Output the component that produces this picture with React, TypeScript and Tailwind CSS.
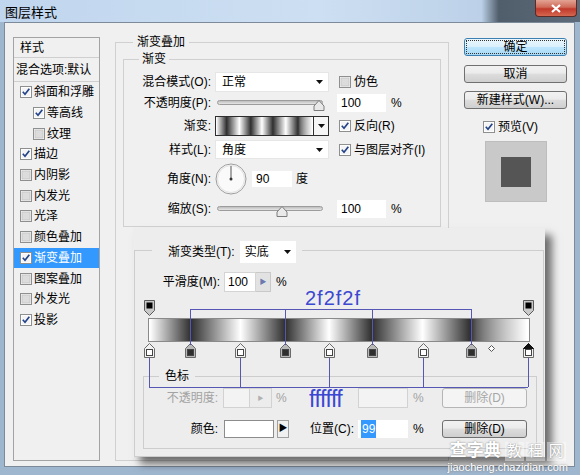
import type { ReactNode } from 'react';

type Stop = { x: number; color: string; selected?: boolean };

// color stops of the gradient editor, x in page pixels
const STOPS: Stop[] = [
  { x: 149, color: '#ffffff' },
  { x: 190, color: '#2f2f2f' },
  { x: 240, color: '#ffffff' },
  { x: 285, color: '#2f2f2f' },
  { x: 329, color: '#ffffff' },
  { x: 372, color: '#2f2f2f' },
  { x: 423, color: '#ffffff' },
  { x: 471, color: '#2f2f2f' },
  { x: 528, color: '#ffffff', selected: true },
];

const BAR_LEFT = 148;
const BAR_WIDTH = 382;
const OVERLAY_X = 133;
const OVERLAY_Y = 228;
const toPct = (x: number) => ((x - BAR_LEFT) / BAR_WIDTH) * 100;

const parts = STOPS.map((s) => `${s.color} ${toPct(s.x).toFixed(2)}%`);
parts.splice(STOPS.length - 1, 0, `${toPct(491).toFixed(2)}%`);
const BAR_GRADIENT = `linear-gradient(to right, ${parts.join(', ')})`;

const LIST_ITEMS: { label: string; checked: boolean; indent?: boolean; active?: boolean }[] = [
  { label: '斜面和浮雕', checked: true },
  { label: '等高线', checked: true, indent: true },
  { label: '纹理', checked: false, indent: true },
  { label: '描边', checked: true },
  { label: '内阴影', checked: false },
  { label: '内发光', checked: false },
  { label: '光泽', checked: false },
  { label: '颜色叠加', checked: false },
  { label: '渐变叠加', checked: true, active: true },
  { label: '图案叠加', checked: false },
  { label: '外发光', checked: false },
  { label: '投影', checked: true },
];

function CheckBox({ checked }: { checked?: boolean }) {
  return (
    <svg width="12" height="12" viewBox="0 0 12 12" className="shrink-0">
      <rect x="0.5" y="0.5" width="11" height="11" fill="#fdfdfd" stroke="#8e8f8f" />
      <rect x="2" y="2" width="8" height="8" fill={checked ? '#f4f4f4' : '#dcdcdc'} stroke={checked ? 'none' : '#c8c8c8'} strokeWidth="1" />
      {checked && (
        <path d="M2.8 5.8 L5 8.2 L9.3 2.8" stroke="#22438a" strokeWidth="1.7" fill="none" />
      )}
    </svg>
  );
}

function DropArrow() {
  return (
    <svg width="7" height="4" viewBox="0 0 7 4" className="shrink-0">
      <path d="M0 0 H7 L3.5 4 Z" fill="#111" />
    </svg>
  );
}

function Check({ checked, children }: { checked?: boolean; children: ReactNode }) {
  return (
    <div className="ml-[10px] flex items-center gap-[3px]">
      <CheckBox checked={checked} />
      <span>{children}</span>
    </div>
  );
}

function Select({ value }: { value: string }) {
  return (
    <div className="ml-[4px] flex h-full w-[114px] items-center justify-between border border-[#e6e6e6] bg-white pl-[6px] pr-[5px]">
      <span>{value}</span>
      <DropArrow />
    </div>
  );
}

function Slider({ value }: { value: number }) {
  return (
    <div className="relative ml-[6px] h-full w-[106px]">
      <div className="absolute left-0 right-0 top-[6px] h-[5px] rounded-full border border-[#9c9c9c] bg-[linear-gradient(#bdbdbd,#e6e6e6)]" />
      <svg
        className="absolute top-[5px]"
        style={{ left: `calc(${value}% - 6px)` }}
        width="12"
        height="12"
        viewBox="0 0 12 12"
      >
        <path d="M1 11.5 V7 L6 1.5 L11 7 V11.5 Z" fill="#e9e9e9" stroke="#7c7c7c" />
      </svg>
    </div>
  );
}

function Input({ value, className }: { value: string; className: string }) {
  return (
    <div className={`flex items-center bg-white pl-[4px] ${className}`}>{value}</div>
  );
}

function Button({ children, primary, disabled }: { children: ReactNode; primary?: boolean; disabled?: boolean }) {
  if (primary) {
    return (
      <div className="flex h-[18px] w-[103px] items-center justify-center rounded-[3px] border border-[#3c7fb1] bg-[linear-gradient(#eaf6fd,#d9f0fc_50%,#bee6fd_50%,#a7d9f5)] p-[1px]">
        <div className="flex h-full w-full items-center justify-center border border-dotted border-[#333]">
          {children}
        </div>
      </div>
    );
  }
  if (disabled) {
    return (
      <div className="flex h-full w-[85px] items-center justify-center rounded-[3px] border border-[#b5b5b5] bg-[#f4f4f4] text-[#a6a6a6]">
        {children}
      </div>
    );
  }
  return (
    <div className="flex h-[18px] w-[103px] items-center justify-center rounded-[3px] border border-[#707070] bg-[linear-gradient(#f2f2f2,#ebebeb_45%,#dddddd_50%,#cfcfcf)]">
      {children}
    </div>
  );
}

function BottomStop({ stop }: { stop: Stop }) {
  const dark = stop.color !== '#ffffff';
  return (
    <svg
      className="absolute top-0"
      style={{ left: `calc(${toPct(stop.x)}% - 5.5px)` }}
      width="11"
      height="15"
      viewBox="0 0 11 15"
    >
      <path d="M0.5 5.5 L5.5 0.5 L10.5 5.5 V14.5 H0.5 Z" fill={dark ? '#b8b8b8' : '#f2f2f2'} stroke="#6a6a6a" />
      {stop.selected && <path d="M0.5 5.5 L5.5 0.5 L10.5 5.5 Z" fill="#111" stroke="#111" />}
      <rect x="2.5" y="6.5" width="6" height="6" fill={stop.color} stroke="#444" />
    </svg>
  );
}

function TopStop({ pct }: { pct: number }) {
  return (
    <svg
      className="absolute top-0"
      style={{ left: `calc(${pct}% - 5.5px)` }}
      width="11"
      height="16"
      viewBox="0 0 11 16"
    >
      <path d="M0.5 0.5 H10.5 V10.5 L5.5 15.5 L0.5 10.5 Z" fill="#c9c9c9" stroke="#5a5a5a" />
      <rect x="2.5" y="2.5" width="6" height="6" fill="#000" />
    </svg>
  );
}

function Annotations() {
  const dark = STOPS.filter((s) => s.color !== '#ffffff').map((s) => s.x - OVERLAY_X);
  const light = STOPS.filter((s) => s.color === '#ffffff').map((s) => s.x - OVERLAY_X);
  const topY = 309 - OVERLAY_Y;
  const lowY = 387 - OVERLAY_Y;
  return (
    <svg className="pointer-events-none absolute left-0 top-0" width="412" height="229">
      <g stroke="#5656b4" strokeWidth="1" fill="none" shapeRendering="crispEdges">
        <line x1={dark[0]} y1={topY} x2={dark[dark.length - 1]} y2={topY} />
        {dark.map((x) => (
          <line key={`d${x}`} x1={x} y1={topY} x2={x} y2={117} />
        ))}
        <line x1={light[0]} y1={lowY} x2={light[light.length - 1]} y2={lowY} />
        {light.map((x) => (
          <line key={`l${x}`} x1={x} y1={130} x2={x} y2={lowY} />
        ))}
      </g>
    </svg>
  );
}

function GradientEditor() {
  return (
    <div className="absolute left-[133px] top-[228px] h-[229px] w-[412px] bg-[#ededed] px-[1px] pt-[13px] shadow-[7px_7px_8px_rgba(0,0,0,0.55)]">
      <fieldset className="h-[216px] border border-[#cdcdcd]">
        <legend className="ml-[17px] pl-[16px] pr-[6px]">
          <div className="flex h-[18px] items-start gap-[5px]">
            <span className="leading-[22px]">渐变类型(T):</span>
            <div className="flex h-[22px] w-[56px] items-center justify-between bg-white pl-[5px] pr-[5px]">
              <span>实底</span>
              <DropArrow />
            </div>
          </div>
        </legend>

        <div className="mt-[13px] flex h-[20px] items-center">
          <span className="w-[85px] text-right">平滑度(M):</span>
          <div className="ml-[4px] flex h-full w-[32px] items-center border border-[#d4d4d4] bg-white pl-[3px]">100</div>
          <div className="flex h-full w-[15px] items-center justify-center border border-l-0 border-[#c9c9c9] bg-[#e2e2e2] text-[7px] text-[#6a7ab0]">
            ▶
          </div>
          <span className="ml-[5px]">%</span>
        </div>

        <div className="ml-[13px] mt-[8px] w-[382px]">
          <div className="relative h-[16px]">
            <TopStop pct={0.5} />
            <TopStop pct={99.7} />
          </div>
          <div className="mt-[2px] h-[24px] border border-[#8a8a8a]" style={{ background: BAR_GRADIENT }} />
          <div className="relative mt-[1px] h-[15px]">
            {STOPS.map((s) => (
              <BottomStop key={s.x} stop={s} />
            ))}
            <svg className="absolute top-[2px]" style={{ left: `calc(${toPct(491)}% - 3px)` }} width="7" height="7" viewBox="0 0 7 7">
              <path d="M3.5 0.5 L6.5 3.5 L3.5 6.5 L0.5 3.5 Z" fill="#fff" stroke="#555" />
            </svg>
          </div>
        </div>

        <fieldset className="ml-[8px] mr-[6px] mt-[10px] h-[81px] border border-[#cdcdcd]">
          <legend className="ml-[15px] px-[6px] leading-[16px]">色标</legend>
          <div className="mt-[4px] flex h-[20px] items-center text-[#a3a3a3]">
            <span className="w-[74px] text-right">不透明度:</span>
            <div className="ml-[5px] h-full w-[27px] border border-[#d2d2d2] bg-[#f3f3f3]" />
            <div className="flex h-full w-[22px] items-center justify-center border border-l-0 border-[#d2d2d2] bg-[#ececec] text-[6px] text-[#b0b0b0]">
              ▶
            </div>
            <span className="ml-[4px] w-[14px]">%</span>
            <span className="w-[64px]" />
            <div className="ml-[4px] h-full w-[50px] border border-[#d2d2d2] bg-[#f3f3f3]" />
            <span className="ml-[5px] w-[10px]">%</span>
            <div className="ml-[19px] h-full">
              <Button disabled>删除(D)</Button>
            </div>
          </div>
          <div className="mt-[12px] flex h-[18px] items-center">
            <span className="w-[74px] text-right">颜色:</span>
            <div className="ml-[6px] h-full w-[50px] border border-[#8c8c8c] bg-white" />
            <div className="ml-[3px] flex h-full w-[12px] items-center justify-center border border-[#a0a0a0] bg-[#f0f0f0] text-[9px]">
              ▶
            </div>
            <span className="ml-[1px] w-[64px] text-right">位置(C):</span>
            <div className="ml-[4px] flex h-full w-[50px] items-center bg-white pl-[3px]">
              <span className="bg-[#3399ff] px-[1px] text-white">99</span>
            </div>
            <span className="ml-[5px] w-[10px]">%</span>
            <div className="ml-[19px] h-full">
              <div className="flex h-full w-[85px] items-center justify-center rounded-[3px] border border-[#707070] bg-[linear-gradient(#f2f2f2,#ebebeb_45%,#dddddd_50%,#cfcfcf)]">
                删除(D)
              </div>
            </div>
          </div>
        </fieldset>
      </fieldset>

      <Annotations />
      <span className="absolute left-[172px] top-[60px] text-[20px] leading-none tracking-[1px] text-[#3b48d2]">2f2f2f</span>
      <span className="absolute left-[176px] top-[160px] text-[23px] leading-none tracking-[-0.5px] text-[#3b48d2]">ffffff</span>
    </div>
  );
}

export default function App() {
  return (
    <div className="relative h-[475px] w-[580px] overflow-hidden bg-[#9fb6cf] font-['Liberation_Sans','Noto_Sans_CJK_SC',sans-serif] text-[12px] text-black">
      {/* title bar */}
      <div className="flex h-[22px] items-start bg-[linear-gradient(to_right,#c0d6ee_0%,#cddff2_55%,#bcd1e8_83%,#505d6b_86%,#5d6b7a_100%)]">
        <span className="ml-[5px] mt-[3px] text-[13px]">图层样式</span>
        <div className="ml-auto mr-[3px] flex h-[17px] w-[42px] items-center justify-center rounded-b-[4px] border border-t-0 border-[#5e2a26] bg-[linear-gradient(#e3a394,#cf6a59_45%,#c0392b_55%,#d4674f)]">
          <svg width="10" height="9" viewBox="0 0 10 9">
            <path d="M1 1 L9 8 M9 1 L1 8" stroke="#fff" strokeWidth="2.2" />
          </svg>
        </div>
      </div>

      {/* dialog body */}
      <div className="ml-[4px] mr-[5px] flex h-[445px] items-start border border-[#7c8a99] bg-[#f0f0f0] pl-[8px]">
        {/* styles list */}
        <div className="mt-[14px] flex h-[424px] w-[87px] flex-col border border-[#a3a3a3]">
          <div className="flex h-[20px] items-center border-b border-[#cfcfcf] pl-[6px]">样式</div>
          <div className="flex h-[24px] items-center border-b border-[#cfcfcf] pl-[2px]">混合选项:默认</div>
          {LIST_ITEMS.map((item) => (
            <div
              key={item.label}
              className={`flex h-[20.7px] items-center gap-[2px] ${item.indent ? 'pl-[19px]' : 'pl-[6px]'} ${
                item.active ? 'bg-[#3399ff] text-white' : ''
              }`}
            >
              <CheckBox checked={item.checked} />
              <span>{item.label}</span>
            </div>
          ))}
        </div>

        {/* gradient overlay settings */}
        <fieldset className="ml-[15px] mt-[11px] h-[427px] w-[334px] border border-[#d0d0d0]">
          <legend className="ml-[17px] px-[4px] leading-[16px]">渐变叠加</legend>
          <fieldset className="mx-[7px] mt-[1px] h-[176px] border border-[#d0d0d0]">
            <legend className="ml-[15px] px-[3px] leading-[16px]">渐变</legend>

            <div className="mt-[5px] flex h-[20px] items-center">
              <span className="w-[87px] text-right">混合模式(O):</span>
              <Select value="正常" />
              <Check>伪色</Check>
            </div>

            <div className="mt-[2px] flex h-[18px] items-center">
              <span className="w-[87px] text-right">不透明度(P):</span>
              <Slider value={96} />
              <Input value="100" className="ml-[14px] h-full w-[49px]" />
              <span className="ml-[5px]">%</span>
            </div>

            <div className="mt-[4px] flex h-[20px] items-center">
              <span className="w-[87px] text-right">渐变:</span>
              <div className="ml-[4px] h-full w-[99px] border border-[#2e2e2e]" style={{ background: BAR_GRADIENT }} />
              <div className="flex h-full w-[15px] items-center justify-center border border-l-0 border-[#2e2e2e] bg-[#f6f6f6]">
                <DropArrow />
              </div>
              <Check checked>反向(R)</Check>
            </div>

            <div className="mt-[4px] flex h-[19px] items-center">
              <span className="w-[87px] text-right">样式(L):</span>
              <Select value="角度" />
              <Check checked>与图层对齐(I)</Check>
            </div>

            <div className="mt-[2px] flex h-[36px] items-center">
              <span className="w-[87px] text-right">角度(N):</span>
              <svg className="ml-[4px]" width="32" height="32" viewBox="0 0 32 32">
                <circle cx="16" cy="16" r="15" fill="#fafafa" stroke="#9d9d9d" />
                <circle cx="16" cy="16" r="13.5" fill="none" stroke="#e2e2e2" />
                <line x1="16" y1="16" x2="16" y2="3" stroke="#555" strokeWidth="1" />
                <circle cx="16" cy="16" r="1.5" fill="#333" />
              </svg>
              <Input value="90" className="ml-[5px] h-[16px] w-[40px]" />
              <span className="ml-[4px]">度</span>
            </div>

            <div className="mt-[3px] flex h-[18px] items-center">
              <span className="w-[87px] text-right">缩放(S):</span>
              <Slider value={61} />
              <Input value="100" className="ml-[14px] h-full w-[49px]" />
              <span className="ml-[5px]">%</span>
            </div>
          </fieldset>
        </fieldset>

        {/* buttons column */}
        <div className="ml-[15px] mt-[15px] flex w-[103px] flex-col items-center">
          <Button primary>确定</Button>
          <div className="mt-[9px]">
            <Button>取消</Button>
          </div>
          <div className="mt-[8px]">
            <Button>新建样式(W)...</Button>
          </div>
          <div className="mt-[9px] flex items-center gap-[3px] pr-[10px]">
            <CheckBox checked />
            <span>预览(V)</span>
          </div>
          <div className="mt-[5px] flex h-[61px] w-[62px] items-center justify-center border border-[#bdbdbd] bg-[#c9c9c9]">
            <div className="h-[30px] w-[30px] bg-[#555555]" />
          </div>
        </div>
      </div>

      <GradientEditor />

      {/* site watermark */}
      <div className="pointer-events-none absolute bottom-[2px] right-[12px] flex flex-col items-center text-white [text-shadow:0_0_2px_#7a7a7a]">
        <div className="flex items-center gap-[4px] text-[17px] font-bold leading-[20px]">
          <span>查字典</span>
          <span className="flex gap-[2px]">
            {['教', '程', '网'].map((c) => (
              <span key={c} className="flex h-[19px] w-[19px] items-center justify-center bg-white/40 text-[15px] font-normal">
                {c}
              </span>
            ))}
          </span>
        </div>
        <span className="text-[11px] leading-[12px]">jiaocheng.chazidian.com</span>
      </div>
    </div>
  );
}
